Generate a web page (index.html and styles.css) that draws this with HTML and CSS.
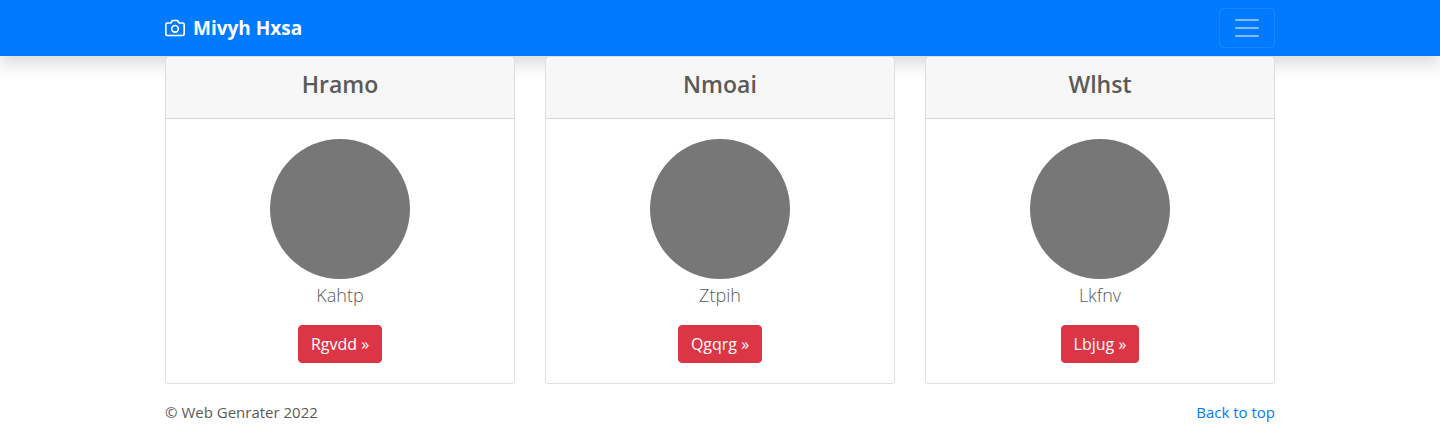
FILE: index.html
```html
<!DOCTYPE html>
<html lang="en">
<head>
<meta charset="utf-8">
<meta name="viewport" content="width=device-width, initial-scale=1">
<title>Mivyh Hxsa</title>
<link rel="stylesheet" href="styles.css">
</head>
<body>
<header class="navbar" id="top">
  <div class="container navbar-inner">
    <a class="brand" href="#top">
      <svg class="brand-icon" width="20" height="20" viewBox="0 0 24 24" fill="none" stroke="currentColor" stroke-width="2" stroke-linecap="round" stroke-linejoin="round" aria-hidden="true"><path d="M23 19a2 2 0 0 1-2 2H3a2 2 0 0 1-2-2V8a2 2 0 0 1 2-2h4l2-3h6l2 3h4a2 2 0 0 1 2 2z"/><circle cx="12" cy="13" r="4"/></svg>
      <strong>Mivyh Hxsa</strong>
    </a>
    <button class="toggler" type="button" aria-label="Toggle navigation">
      <svg class="toggler-icon" width="30" height="30" viewBox="0 0 30 30" aria-hidden="true"><path stroke="rgba(255,255,255,.5)" stroke-width="2" stroke-linecap="round" stroke-miterlimit="10" d="M4 7h22M4 15h22M4 23h22"/></svg>
    </button>
  </div>
</header>
<main class="container cards">
  <section class="card">
    <div class="card-header"><h2 class="card-title">Hramo</h2></div>
    <div class="card-body">
      <div class="avatar"></div>
      <p class="lead">Kahtp</p>
      <a class="btn" href="#">Rgvdd »</a>
    </div>
  </section>
  <section class="card">
    <div class="card-header"><h2 class="card-title">Nmoai</h2></div>
    <div class="card-body">
      <div class="avatar"></div>
      <p class="lead">Ztpih</p>
      <a class="btn" href="#">Qgqrg »</a>
    </div>
  </section>
  <section class="card">
    <div class="card-header"><h2 class="card-title">Wlhst</h2></div>
    <div class="card-body">
      <div class="avatar"></div>
      <p class="lead">Lkfnv</p>
      <a class="btn" href="#">Lbjug »</a>
    </div>
  </section>
</main>
<footer class="container footer">
  <p class="copyright">© Web Genrater 2022</p>
  <a class="back" href="#top">Back to top</a>
</footer>
</body>
</html>
```
FILE: styles.css
```css
*, *::before, *::after { box-sizing: border-box; }

body {
  margin: 0;
  font-family: "Segoe UI", "Open Sans", "Noto Sans", sans-serif;
  font-size: 15px;
  line-height: 24px;
  color: #5a5a5a;
  background: #fff;
}

.container {
  width: 100%;
  max-width: 1140px;
  margin: 0 auto;
  padding: 0 15px;
}

.navbar {
  padding: 8px 0;
  background: #007bff;
  box-shadow: 0 8px 16px rgba(0, 0, 0, .15);
}

.navbar-inner {
  display: flex;
  align-items: center;
  justify-content: space-between;
}

.brand {
  display: flex;
  align-items: center;
  gap: 8px;
  font-size: 19px;
  line-height: 32px;
  color: #fff;
  text-decoration: none;
}

.toggler {
  display: flex;
  padding: 4px 12px;
  border: 1px solid rgba(255, 255, 255, .1);
  border-radius: 4px;
  background: transparent;
}

.cards {
  display: grid;
  grid-template-columns: repeat(auto-fit, minmax(260px, 1fr));
  gap: 30px;
}

.card {
  border: 1px solid rgba(0, 0, 0, .125);
  border-radius: 4px;
  background: #fff;
  text-align: center;
}

.card-header {
  padding: 12px 20px;
  border-bottom: 1px solid rgba(0, 0, 0, .125);
  background: rgba(0, 0, 0, .03);
}

.card-title {
  margin: 0 0 6px;
  font-size: 23px;
  font-weight: 600;
  line-height: 31px;
}

.card-body { padding: 20px; }

.avatar {
  width: 140px;
  height: 140px;
  margin: 0 auto;
  border-radius: 50%;
  background: #777;
}

.lead {
  margin: 0 0 14px;
  font-size: 18px;
  font-weight: 300;
  line-height: 32px;
}

.btn {
  display: inline-block;
  padding: 6px 12px;
  border: 1px solid #dc3545;
  border-radius: 4px;
  background: #dc3545;
  color: #fff;
  font-size: 16px;
  text-decoration: none;
}

.footer {
  display: flex;
  justify-content: space-between;
  padding-top: 16px;
}

.copyright { margin: 0 0 16px; }

.back {
  color: #007bff;
  text-decoration: none;
}
```
